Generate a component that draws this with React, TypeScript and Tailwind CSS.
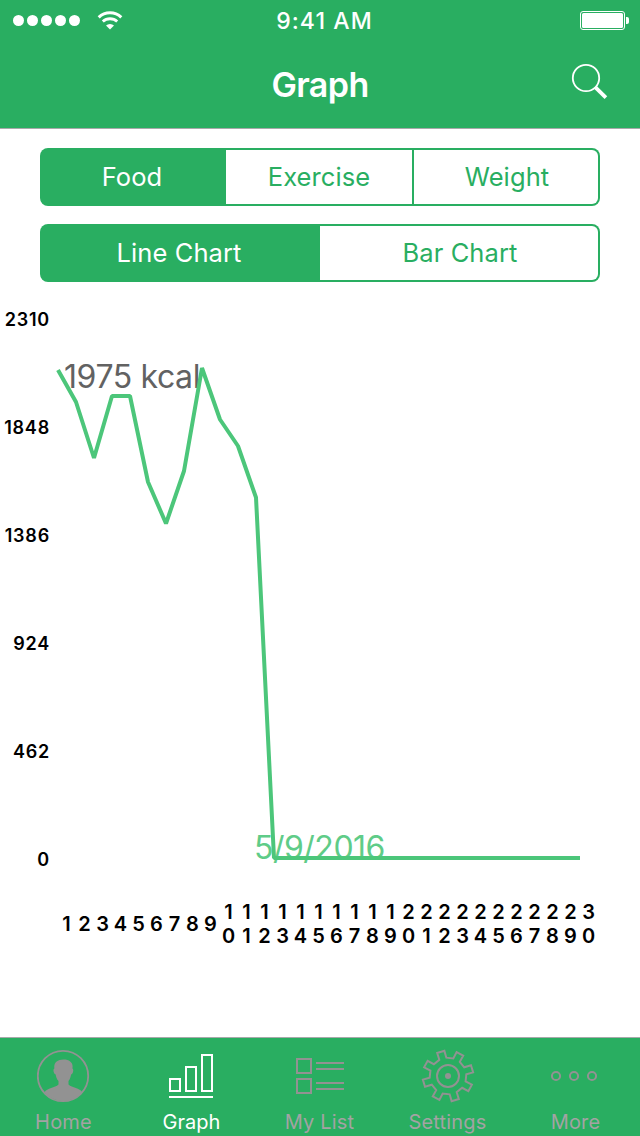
import React from "react";

const points = [
    [58, 370], [76, 402], [94, 458], [112, 396], [130, 396], [148, 482], [166, 523.5],
    [184, 471], [202, 368], [220, 419.5], [238, 446], [256, 497.5], [274, 858], [580, 858],
];
const yLabels = ["2310", "1848", "1386", "924", "462", "0"];
const days = Array.from({ length: 30 }, (_, i) => String(i + 1));

// Outline of the eight-toothed settings gear, centred on 0,0
const gearPoints = Array.from({ length: 8 }, (_, i) => {
    const mid = -106.7 + i * 45;
    return [[-11.5, 18.4], [-8.5, 25.4], [8.5, 25.4], [11.5, 18.4]]
        .map(([offset, r]) => {
            const a = ((mid + offset) * Math.PI) / 180;
            return `${(r * Math.cos(a)).toFixed(2)},${(r * Math.sin(a)).toFixed(2)}`;
        })
        .join(" ");
}).join(" ");

const StatusBar: React.FC = () => (
    <div className="grid h-[41px] grid-cols-[1fr_auto_1fr] items-center pl-[13px] pr-[11px]">
        <div className="flex items-center">
            <div className="flex gap-[3px]">
                {[0, 1, 2, 3, 4].map((dot) => (
                    <span key={dot} className="size-[11px] rounded-full bg-white" />
                ))}
            </div>
            <svg className="ml-[17px]" width="26" height="20" viewBox="0 0 26 20" fill="none" stroke="#fff">
                <path d="M1.7 6.3a16.4 16.4 0 0 1 22.6 0" strokeWidth="3" />
                <path d="M5.8 10.6a10.5 10.5 0 0 1 14.4 0" strokeWidth="2.8" />
                <path d="M13 18.5l-4-4a5.8 5.8 0 0 1 8 0z" fill="#fff" stroke="none" />
            </svg>
        </div>
        <div className="pl-[7px] pt-px text-[23px] font-medium tracking-[1.1px]">9:41 AM</div>
        <svg className="justify-self-end" width="49" height="19" viewBox="0 0 49 19">
            <rect x="0.5" y="0.5" width="44" height="18" rx="2.5" fill="none" stroke="#fff" />
            <rect x="2" y="2" width="41" height="15" rx="1.5" fill="#fff" />
            <path d="M46 6h1a2 2 0 0 1 2 2v3a2 2 0 0 1-2 2h-1z" fill="#fff" />
        </svg>
    </div>
);

const Header: React.FC = () => (
    <header className="h-[129px] border-b border-[#a8a9aa] bg-[#29ae61] text-white">
        <StatusBar />
        <div className="grid h-[86px] grid-cols-[1fr_auto_1fr] items-center">
            <span />
            <h1 className="text-[34px] font-semibold tracking-[-0.6px]">Graph</h1>
            <svg className="mb-[6px] mr-8 justify-self-end" width="37" height="37" viewBox="0 0 37 37" fill="none" stroke="#fff">
                <circle cx="15" cy="15" r="13.2" strokeWidth="1.8" />
                <path d="M24.2 24.2l10.7 10.4" strokeWidth="3.8" />
            </svg>
        </div>
    </header>
);

interface SegmentsProps {
    items: string[];
    columns: string;
}

const Segments: React.FC<SegmentsProps> = ({ items, columns }) => (
    <div className={`grid h-[58px] rounded-[8px] bg-[#29ae61] p-0.5 text-[25.5px] tracking-[0.1px] ${columns}`}>
        {items.map((item, i) => (
            <button
                key={item}
                className={
                    i === 0
                        ? "pr-1 pt-px text-white"
                        : i === items.length - 1
                            ? "rounded-r-[6px] bg-white pl-0.5 pt-px text-[#29ae61]"
                            : "mr-0.5 bg-white pt-px text-[#29ae61]"
                }
            >
                {item}
            </button>
        ))}
    </div>
);

const Chart: React.FC = () => (
    <section className="relative h-[662px] pt-[5px]">
        <div className="flex w-[50px] flex-col text-right text-[18px] font-semibold tracking-[0.8px] text-black">
            {yLabels.map((label) => (
                <span key={label} className="h-[108px] leading-[34px]">{label}</span>
            ))}
        </div>
        <svg className="absolute left-0 top-0" width="640" height="662" viewBox="0 298 640 662">
            <text x="64" y="388" fontSize="32" letterSpacing="-0.4" fill="#626262">1975 kcal</text>
            <text x="254" y="859" fontSize="32" letterSpacing="-0.5" fill="#5fcc88">5/9/2016</text>
            <polyline
                points={points.map((p) => p.join(",")).join(" ")}
                fill="none"
                stroke="#4cc67a"
                strokeWidth="4"
                strokeLinejoin="bevel"
            />
        </svg>
    </section>
);

const DayAxis: React.FC = () => (
    <div className="-mt-[60px] flex h-12 items-center pl-[57.5px] text-[20px] font-semibold leading-6 text-black">
        {days.map((day) => (
            <span key={day} className="flex w-[18px] shrink-0 flex-col items-center">
                {day.split("").map((digit, i) => (
                    <span key={i}>{digit}</span>
                ))}
            </span>
        ))}
    </div>
);

const HomeIcon = () => (
    <svg width="54" height="54" viewBox="-26 -27 54 54" fill="none">
        <circle r="25.2" stroke="#929292" strokeWidth="1.8" />
        <path
            fill="#929292"
            d="M-18.5 16.5C-16 11.5-8 12-4.5 8.5V5C-6.5 3-7 .5-7.3-1.5-9.5-2-10.3-7-8.6-7.5-9.5-13-6-16.5.5-16.5S10.5-13 9.4-7.5C11-7 10.2-2 8.1-1.5 7.7.5 7.2 3 5.5 5V8.5C9 12 17 11.5 19.3 16.5A25 25 0 0 1-18.5 16.5Z"
        />
    </svg>
);

const GraphIcon = () => (
    <svg width="54" height="54" viewBox="1 0 54 54" fill="none" stroke="#fff" strokeWidth="2">
        <path d="M6 30h10v12H6zM22 18h10v24H22zM38 6h10v36H38zM5 48h44" />
    </svg>
);

const ListIcon = () => (
    <svg width="54" height="54" viewBox="0 0 54 54" fill="none" stroke="#929292" strokeWidth="2">
        <path d="M4 10h14v14H4zM4 30h14v14H4zM23 14h28M23 20h28M23 34h28M23 40h28" />
    </svg>
);

const SettingsIcon = () => (
    <svg width="54" height="54" viewBox="-27 -27 54 54" fill="none" stroke="#929292">
        <polygon points={gearPoints} strokeWidth="2" />
        <circle r="11" strokeWidth="2" />
        <circle r="3" fill="#929292" stroke="none" />
    </svg>
);

const MoreIcon = () => (
    <svg width="54" height="54" viewBox="-26 -27 54 54" fill="none" stroke="#929292" strokeWidth="2">
        <circle cx="-19" r="4.1" />
        <circle cx="-1" r="4.1" />
        <circle cx="17" r="4.1" />
    </svg>
);

const tabs = [
    { label: "Home", icon: HomeIcon },
    { label: "Graph", icon: GraphIcon, active: true },
    { label: "My List", icon: ListIcon },
    { label: "Settings", icon: SettingsIcon },
    { label: "More", icon: MoreIcon },
];

const TabBar: React.FC = () => (
    <nav className="mt-auto grid h-[99px] grid-cols-5 border-t border-[#a8a9aa] bg-[#29ae61]">
        {tabs.map(({ label, icon: Icon, active }) => (
            <a
                key={label}
                className={
                    active
                        ? "flex flex-col items-center pt-[11px] text-[20px] text-white"
                        : "flex flex-col items-center pt-[11px] text-[20px] tracking-[0.2px] text-[#a3a3a3]"
                }
            >
                <Icon />
                <span className="mr-px mt-[7px] leading-6">{label}</span>
            </a>
        ))}
    </nav>
);

const App: React.FC = () => (
    <div className="flex h-[1136px] w-[640px] flex-col overflow-hidden bg-white font-['Inter',sans-serif]">
        <Header />
        <div className="flex flex-col gap-[18px] px-10 pt-[19px]">
            <Segments items={["Food", "Exercise", "Weight"]} columns="grid-cols-[184px_188px_184px]" />
            <Segments items={["Line Chart", "Bar Chart"]} columns="grid-cols-2" />
        </div>
        <div className="pt-4">
            <Chart />
            <DayAxis />
        </div>
        <TabBar />
    </div>
);

export default App;
